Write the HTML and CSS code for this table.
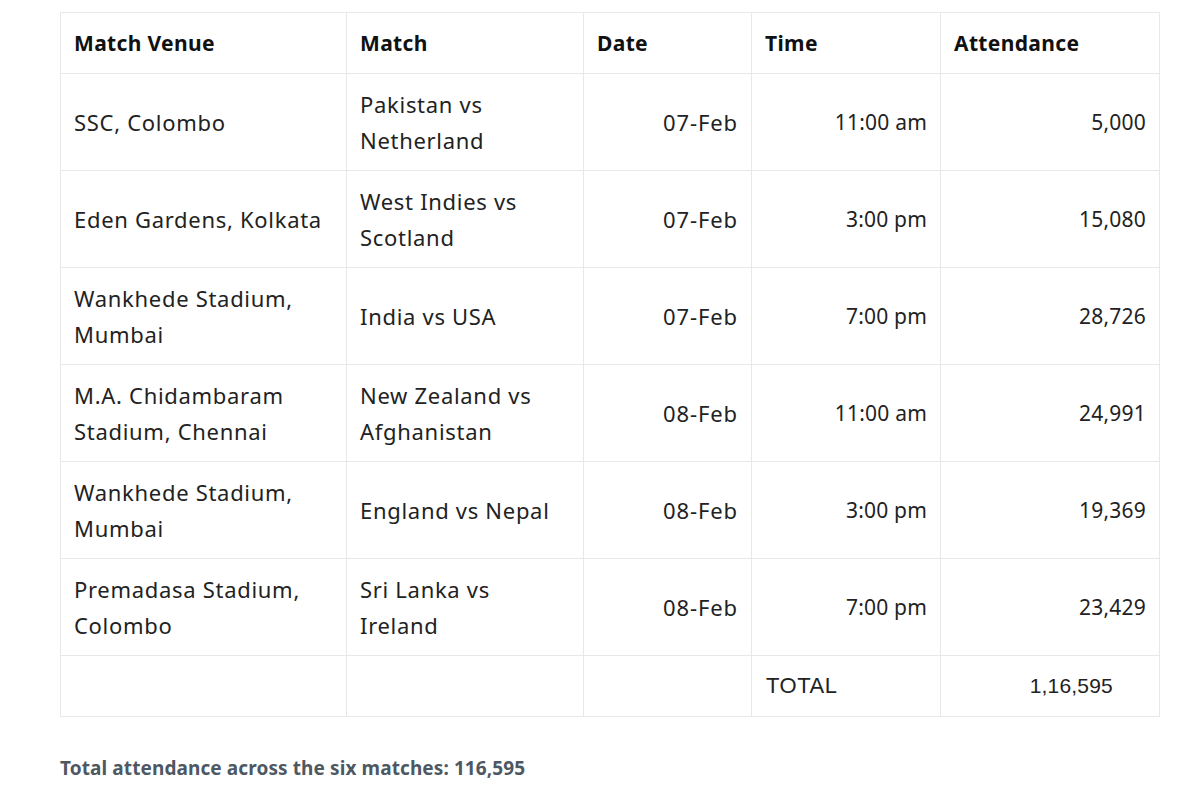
FILE: index.html
```html
<!DOCTYPE html>
<html>
<head>
<meta charset="utf-8">
<link rel="stylesheet" href="styles.css">
</head>
<body>
<div class="wrap">
<table class="att">
<colgroup>
<col class="c1"><col class="c2"><col class="c3"><col class="c4"><col class="c5">
</colgroup>
<thead>
<tr><th>Match Venue</th><th>Match</th><th>Date</th><th>Time</th><th>Attendance</th></tr>
</thead>
<tbody>
<tr><td>SSC, Colombo</td><td>Pakistan vs Netherland</td><td class="r d">07-Feb</td><td class="r">11:00 am</td><td class="r">5,000</td></tr>
<tr><td>Eden Gardens, Kolkata</td><td>West Indies vs Scotland</td><td class="r d">07-Feb</td><td class="r">3:00 pm</td><td class="r">15,080</td></tr>
<tr><td>Wankhede Stadium, Mumbai</td><td>India vs USA</td><td class="r d">07-Feb</td><td class="r">7:00 pm</td><td class="r">28,726</td></tr>
<tr><td>M.A. Chidambaram Stadium, Chennai</td><td>New Zealand vs Afghanistan</td><td class="r d">08-Feb</td><td class="r">11:00 am</td><td class="r">24,991</td></tr>
<tr><td>Wankhede Stadium, Mumbai</td><td>England vs Nepal</td><td class="r d">08-Feb</td><td class="r">3:00 pm</td><td class="r">19,369</td></tr>
<tr><td>Premadasa Stadium, Colombo</td><td>Sri Lanka vs Ireland</td><td class="r d">08-Feb</td><td class="r">7:00 pm</td><td class="r">23,429</td></tr>
<tr class="tot"><td></td><td></td><td></td><td class="tl">TOTAL</td><td class="tv">1,16,595</td></tr>
</tbody>
</table>
<p class="note">Total attendance across the six matches: 116,595</p>
</div>
</body>
</html>
```
FILE: styles.css
```css
html, body { margin: 0; padding: 0; background: #fff; }
body { font-family: "Noto Sans", "Open Sans", sans-serif; color: #222; }
.wrap { padding: 12px 0 0 60px; }
.att { border-collapse: collapse; table-layout: fixed; width: 1099px; }
.c1 { width: 286px; } .c2 { width: 237px; } .c3 { width: 168px; } .c4 { width: 189px; } .c5 { width: 219px; }
.att th, .att td { border: 1px solid #e8e8e8; padding: 0 13px; font-size: 22px; letter-spacing: 0.7px; line-height: 36px; vertical-align: middle; text-align: left; }
.att th { height: 60px; font-size: 21px; letter-spacing: 0.35px; font-weight: 700; color: #111; }
.att td { height: 96px; }
.att td.r { text-align: right; font-size: 21px; letter-spacing: 0.2px; }
.att td.d { font-size: 22px; letter-spacing: 0.9px; }
.att tr.tot td { height: 60px; }
.att td.tl { font-family: "Liberation Sans", Arial, sans-serif; font-size: 22px; letter-spacing: 0.5px; padding-left: 14px; }
.att td.tv { font-family: "Liberation Sans", Arial, sans-serif; font-size: 21px; letter-spacing: 0.2px; text-align: right; padding-right: 46px; }
.note { margin: 38px 0 0; font-size: 19px; letter-spacing: 0.1px; font-weight: 700; color: #4d5863; }
```
